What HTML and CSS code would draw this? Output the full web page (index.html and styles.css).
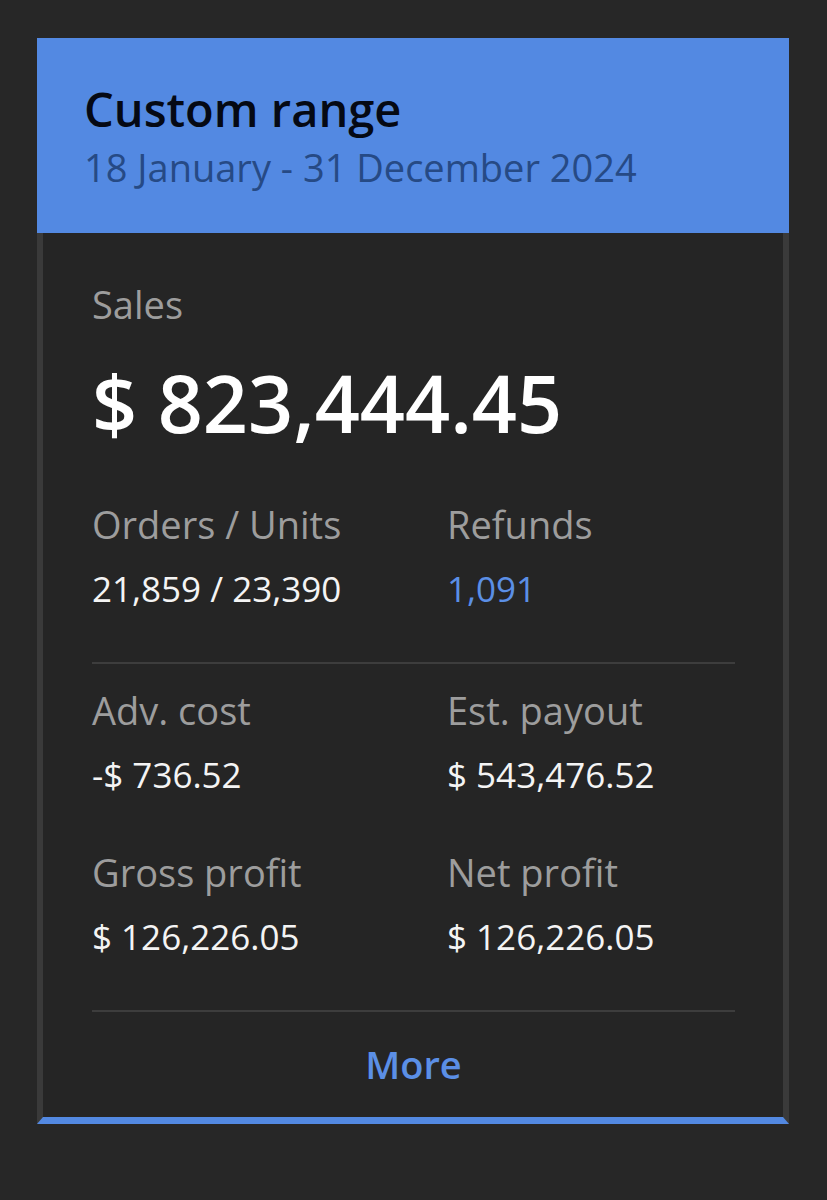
FILE: index.html
```html
<!DOCTYPE html>
<html lang="en">
<head>
    <meta charset="UTF-8">
    <meta name="viewport" content="width=device-width, initial-scale=1.0">
    <title>Sales Summary</title>
    <link rel="stylesheet" href="styles.css">
</head>
<body>
    <div class="card">
        <div class="card-header">
            <h1>Custom range</h1>
            <div class="range">18 January - 31 December 2024</div>
        </div>

        <div class="card-body">
            <div class="label">Sales</div>
            <div class="total">$ 823,444.45</div>

            <div class="stats first">
                <div class="stat">
                    <div class="label">Orders / Units</div>
                    <div class="value">21,859 / 23,390</div>
                </div>
                <div class="stat">
                    <div class="label">Refunds</div>
                    <div class="value link">1,091</div>
                </div>
            </div>

            <hr class="divider">

            <div class="stats">
                <div class="stat">
                    <div class="label">Adv. cost</div>
                    <div class="value">-$ 736.52</div>
                </div>
                <div class="stat">
                    <div class="label">Est. payout</div>
                    <div class="value">$ 543,476.52</div>
                </div>
                <div class="stat">
                    <div class="label">Gross profit</div>
                    <div class="value">$ 126,226.05</div>
                </div>
                <div class="stat">
                    <div class="label">Net profit</div>
                    <div class="value">$ 126,226.05</div>
                </div>
            </div>

            <hr class="divider last">

            <button class="more-btn">More</button>
        </div>
    </div>
</body>
</html>
```

FILE: styles.css
```css
body {
    font-family: 'Open Sans', 'Noto Sans', sans-serif;
    margin: 0;
    padding: 38px 0 0 37px;
    background: #272727;
    color: #f4f4f4;
}

.card {
    width: 752px;
}

.card-header {
    background: #5389e2;
    height: 195px;
    box-sizing: border-box;
    padding: 39px 47px 0;
}

.card-header h1 {
    margin: 0;
    font-size: 47px;
    font-weight: 600;
    line-height: 64px;
    color: #050914;
}

.range {
    font-size: 38px;
    line-height: 52px;
    color: #264a85;
}

.card-body {
    background: #252525;
    border-left: 6px solid #3a3a3a;
    border-right: 6px solid #3a3a3a;
    border-bottom: 7px solid #5389e2;
    padding: 46px 48px 28px 49px;
}

.label {
    font-size: 38px;
    line-height: 50px;
    color: #9d9d9d;
}

.total {
    font-size: 79px;
    font-weight: 600;
    line-height: 96px;
    margin-top: 26px;
    color: #ffffff;
}

.stats {
    display: grid;
    grid-template-columns: 355px 1fr;
    row-gap: 49px;
}

.stats.first {
    margin-top: 48px;
}

.value {
    font-size: 35px;
    line-height: 46px;
    margin-top: 17px;
}

.value.link {
    color: #5b8fe6;
}

.divider {
    border: none;
    height: 2px;
    background: #3d3d3d;
    margin: 50px 0 21px;
}

.divider.last {
    margin-bottom: 27px;
}

.more-btn {
    display: block;
    width: 100%;
    background: none;
    border: none;
    padding: 0;
    font-family: inherit;
    font-size: 38px;
    font-weight: 600;
    line-height: 50px;
    color: #5b8fe6;
    cursor: pointer;
}
```
